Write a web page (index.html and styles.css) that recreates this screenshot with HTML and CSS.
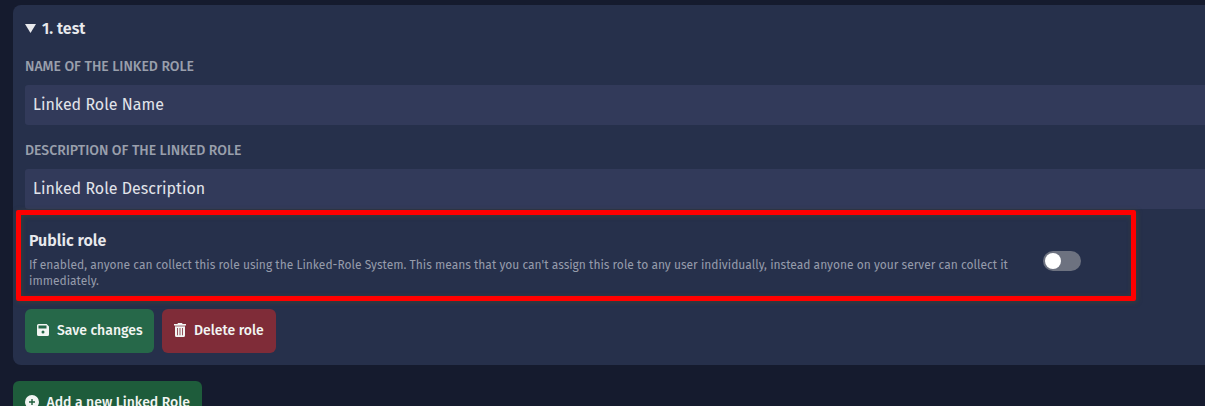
FILE: index.html
```html
<!DOCTYPE html>
<html lang="en">
<head>
<meta charset="utf-8">
<title>Linked Roles</title>
<link rel="stylesheet" href="styles.css">
</head>
<body>
<main class="page">
  <section class="card">
    <header class="summary"><svg class="caret" viewBox="0 0 11 9"><path d="M0 0h11L5.500 9z"/></svg><span>1. test</span></header>
    <label class="label">NAME OF THE LINKED ROLE</label>
    <div class="field">Linked Role Name</div>
    <label class="label second">DESCRIPTION OF THE LINKED ROLE</label>
    <div class="field">Linked Role Description</div>
    <div class="setting">
      <div class="copy">
        <h2 class="title">Public role</h2>
        <p class="help">If enabled, anyone can collect this role using the Linked-Role System. This means that you can't assign this role to any user individually, instead anyone on your server can collect it<br>immediately.</p>
      </div>
      <div class="toggle"><span class="knob"></span></div>
      <div class="highlight"></div>
    </div>
    <div class="actions">
      <button class="btn save"><svg class="i-save" viewBox="0 0 12 12"><path fill-rule="evenodd" d="M1.600 0H9.600L12 2.400v8A1.600 1.600 0 0 1 10.400 12H1.600A1.600 1.600 0 0 1 0 10.400V1.600A1.600 1.600 0 0 1 1.600 0ZM1.500 1.500V4.500H9.500V1.500ZM6 6.600a1.500 1.500 0 1 0 0 3 1.500 1.500 0 0 0 0-3Z"/></svg><span>Save changes</span></button>
      <button class="btn delete"><svg class="i-trash" viewBox="0 0 12 14"><path d="M4 0h4l.600 1H12v1.500H0V1h3.400Z"/><path opacity=".65" d="M1 2.500h10V4H1Z"/><path fill-rule="evenodd" d="M1 4h10v8.500A1.500 1.500 0 0 1 9.500 14h-7A1.500 1.500 0 0 1 1 12.500ZM3.200 5v7.300h.800V5ZM5.600 5v7.300h.800V5ZM8 5v7.300h.800V5Z"/></svg><span>Delete role</span></button>
    </div>
  </section>
  <button class="btn add"><svg class="i-plus" viewBox="0 0 14 14"><path fill-rule="evenodd" d="M7 0a7 7 0 1 1 0 14A7 7 0 0 1 7 0ZM6.300 4v2.300H4v1.400h2.300V10h1.400V7.700H10V6.300H7.700V4Z"/></svg><span>Add a new Linked Role</span></button>
</main>
</body>
</html>
```
FILE: styles.css
```css
* { box-sizing: border-box; }
html, body { margin: 0; height: 100%; overflow: hidden; }
body { background: #151b2e; color: #e8e9ed; font-family: "Fira Sans", "Noto Sans", sans-serif; }
.page { padding: 5px 0 0 13px; height: 406px; overflow: hidden; }
.card { width: 1220px; height: 360px; padding: 11px 12px 12px; border-radius: 8px; background: #26304b; }
.summary { display: flex; align-items: center; gap: 6px; height: 24px; font-size: 16px; font-weight: 600; }
.caret { width: 11px; height: 9px; fill: #e8e9ed; }
.label { display: flex; align-items: center; height: 20px; margin: 16px 0 9px; color: #999fac; font-size: 14px; font-weight: 500; white-space: nowrap; }
.label.second { margin: 15px 0 9px; }
.field { display: flex; align-items: center; height: 40px; padding: 0 8px 2px; border-radius: 3px; background: #323a5a; font-size: 16px; color: #e2e4ea; }
.setting { position: relative; display: flex; height: 84px; margin-top: 8px; padding-left: 4px; white-space: nowrap; }
.highlight { position: absolute; left: -9px; top: -7px; width: 1120px; height: 91px; border: 5px solid #f00; border-radius: 2px; box-shadow: 1px 1px 5px rgba(62, 68, 50, .8), inset 1px 1px 5px rgba(62, 68, 50, .8); }
.copy { width: 1014px; padding-top: 12px; }
.title { margin: 0; height: 24px; font-size: 16px; line-height: 24px; font-weight: 600; }
.help { margin: 4px 0 0; color: #969cab; font-size: 12px; line-height: 16px; }
.toggle { width: 38px; height: 20px; margin-top: 34px; padding: 2px; border-radius: 10px; background: #6d7280; }
.knob { display: block; width: 16px; height: 16px; border-radius: 50%; background: #fff; }
.actions { display: flex; gap: 8px; margin-top: 8px; }
.btn { display: flex; align-items: center; height: 44px; padding: 0 0 2px 12px; border: 0; border-radius: 6px; color: #f2f5f3; font: 500 14px "Fira Sans", "Noto Sans", sans-serif; white-space: nowrap; }
.btn svg { flex: none; fill: currentColor; }
.save { width: 129px; gap: 8px; background: #266849; }
.delete { width: 114px; gap: 8px; background: #7f2c38; }
.add { width: 189px; margin-top: 16px; gap: 7.5px; background: #1e5c3b; }
.i-save { width: 12px; height: 12px; }
.i-trash { width: 12px; height: 14px; }
.i-plus { width: 14px; height: 14px; }
```
